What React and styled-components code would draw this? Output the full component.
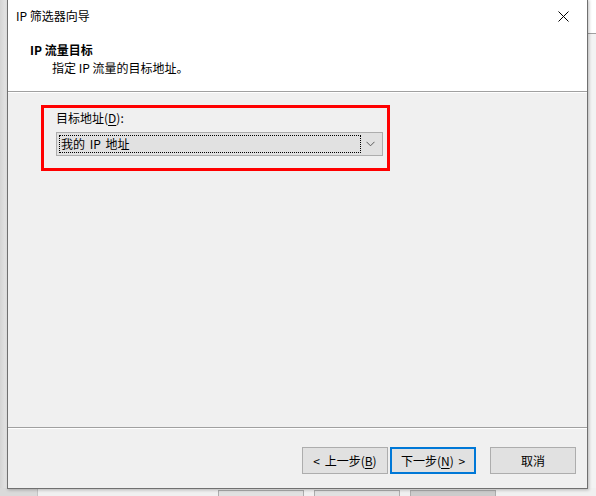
import React from 'react';
import styled, { createGlobalStyle } from 'styled-components';

const GlobalStyle = createGlobalStyle`
  html, body {
    margin: 0;
    padding: 0;
    background: #e4e4e4;
  }
  body {
    font-family: "Noto Sans CJK SC", "Noto Sans", sans-serif;
    font-size: 12px;
    color: #000;
  }
`;

const Desktop = styled.div`
  position: relative;
  width: 596px;
  height: 496px;
  overflow: hidden;
  background: #e4e4e4;
`;

// bits of the parent window that show around the wizard
const LeftStrip = styled.div`
  position: absolute;
  left: 0;
  top: 0;
  width: 7px;
  height: 496px;
  background: linear-gradient(to right, #d4d4d4, #e6e6e6);
`;

const RightStrip = styled.div`
  position: absolute;
  right: 0;
  top: 0;
  width: 10px;
  height: 496px;
  background: #f3f3f3;
  border-top: 33px solid #ffffff;
  box-sizing: border-box;
  &::before {
    content: '';
    position: absolute;
    left: 0;
    right: 0;
    top: 0;
    height: 1px;
    background: #a0a0a0;
  }
`;

const ParentButtons = styled.div`
  position: absolute;
  left: 0;
  top: 488px;
  width: 596px;
  height: 30px;
  display: flex;
  background: #f0f0f0;
  padding-left: 218px;
  gap: 10px;
  box-sizing: border-box;
  &::before {
    content: '';
    position: absolute;
    left: 0;
    top: 0;
    width: 37px;
    height: 8px;
    background: #dadada;
    border-right: 1px solid #c4c4c4;
  }
`;

const ParentButton = styled.div`
  width: 84px;
  height: 26px;
  margin-top: 2px;
  border: 1px solid #adadad;
  background: ${p => (p.$disabled ? '#cccccc' : '#e1e1e1')};
  color: ${p => (p.$disabled ? '#838383' : '#000')};
  display: flex;
  align-items: center;
  justify-content: center;
  line-height: 16px;
`;

const Window = styled.div`
  position: absolute;
  left: 7px;
  top: -1px;
  width: 581px;
  height: 490px;
  box-sizing: border-box;
  border: 1px solid #707070;
  background: #f0f0f0;
  display: flex;
  flex-direction: column;
  box-shadow: 1px 1px 3px rgba(0, 0, 0, 0.25);
`;

const TitleBar = styled.div`
  height: 31px;
  flex: none;
  background: #ffffff;
  display: flex;
  align-items: center;
  justify-content: space-between;
  padding-left: 8px;
  padding-right: 9px;
`;

const Title = styled.span`
  line-height: 16px;
  margin-top: 1px;
`;

const CloseButton = styled.div`
  width: 30px;
  height: 30px;
  display: flex;
  align-items: center;
  justify-content: center;
  margin-top: 1px;
`;

const Header = styled.div`
  height: 61px;
  flex: none;
  background: #ffffff;
  border-bottom: 1px solid #a0a0a0;
  box-sizing: border-box;
  padding: 10px 0 0 22px;
  display: flex;
  flex-direction: column;
`;

const HeaderTitle = styled.div`
  font-weight: bold;
  line-height: 18px;
`;

const HeaderSub = styled.div`
  line-height: 18px;
  padding-left: 22px;
`;

const Body = styled.div`
  flex: 1;
  border-top: 1px solid #ffffff;
  padding: 12px 0 0 33px;
`;

const Highlight = styled.div`
  width: 349px;
  height: 66px;
  box-sizing: border-box;
  border: 3px solid #ff0000;
  padding: 1px 4px 0 12px;
  display: flex;
  flex-direction: column;
  gap: 5px;
`;

const Label = styled.div`
  line-height: 18px;
`;

const Combo = styled.div`
  height: 24px;
  flex: none;
  box-sizing: border-box;
  border: 1px solid #adadad;
  background: #e1e1e1;
  display: flex;
  align-items: center;
  padding: 2px;
`;

const ComboValue = styled.div`
  flex: 1;
  height: 18px;
  box-sizing: border-box;
  border: 1px dotted #000;
  display: flex;
  align-items: center;
  line-height: 16px;
  padding-left: 1px;
  word-spacing: 2px;
`;

const ComboArrow = styled.div`
  width: 19px;
  display: flex;
  align-items: center;
  justify-content: center;
`;

const Footer = styled.div`
  height: 61px;
  flex: none;
  border-top: 1px solid #a0a0a0;
  box-shadow: inset 0 1px 0 #ffffff;
  box-sizing: border-box;
  display: flex;
  justify-content: flex-end;
  align-items: flex-start;
  padding: 19px 11px 0 0;
`;

const Button = styled.button`
  width: 86px;
  height: 27px;
  box-sizing: border-box;
  border: ${p => (p.$default ? '2px solid #0078d7' : '1px solid #adadad')};
  background: #e1e1e1;
  font-family: inherit;
  font-size: 12px;
  color: #000;
  padding: 0;
  line-height: 16px;
  word-spacing: 2px;
  margin-left: ${p => p.$gap || 0}px;
`;

const U = styled.span`
  text-decoration: underline;
  text-underline-offset: 2px;
`;

const Chevron = () => (
  <svg width="9" height="6" viewBox="0 0 9 6">
    <polyline points="0.5,0.8 4.5,4.8 8.5,0.8" fill="none" stroke="#5a5a5a" strokeWidth="1" />
  </svg>
);

const CloseIcon = () => (
  <svg width="11" height="11" viewBox="0 0 11 11">
    <path d="M0.5 0.5 L10.5 10.5 M10.5 0.5 L0.5 10.5" stroke="#000" strokeWidth="1" />
  </svg>
);

export default function App() {
  return (
    <Desktop>
      <GlobalStyle />
      <LeftStrip />
      <RightStrip />
      <ParentButtons>
        <ParentButton>确定</ParentButton>
        <ParentButton>取消</ParentButton>
        <ParentButton $disabled>应用(A)</ParentButton>
      </ParentButtons>
      <Window>
        <TitleBar>
          <Title>IP 筛选器向导</Title>
          <CloseButton>
            <CloseIcon />
          </CloseButton>
        </TitleBar>
        <Header>
          <HeaderTitle>IP 流量目标</HeaderTitle>
          <HeaderSub>指定 IP 流量的目标地址。</HeaderSub>
        </Header>
        <Body>
          <Highlight>
            <Label>
              目标地址(<U>D</U>):
            </Label>
            <Combo>
              <ComboValue>我的 IP 地址</ComboValue>
              <ComboArrow>
                <Chevron />
              </ComboArrow>
            </Combo>
          </Highlight>
        </Body>
        <Footer>
          <Button>
            &lt; 上一步(<U>B</U>)
          </Button>
          <Button $default $gap={2}>
            下一步(<U>N</U>) &gt;
          </Button>
          <Button $gap={14}>取消</Button>
        </Footer>
      </Window>
    </Desktop>
  );
}
